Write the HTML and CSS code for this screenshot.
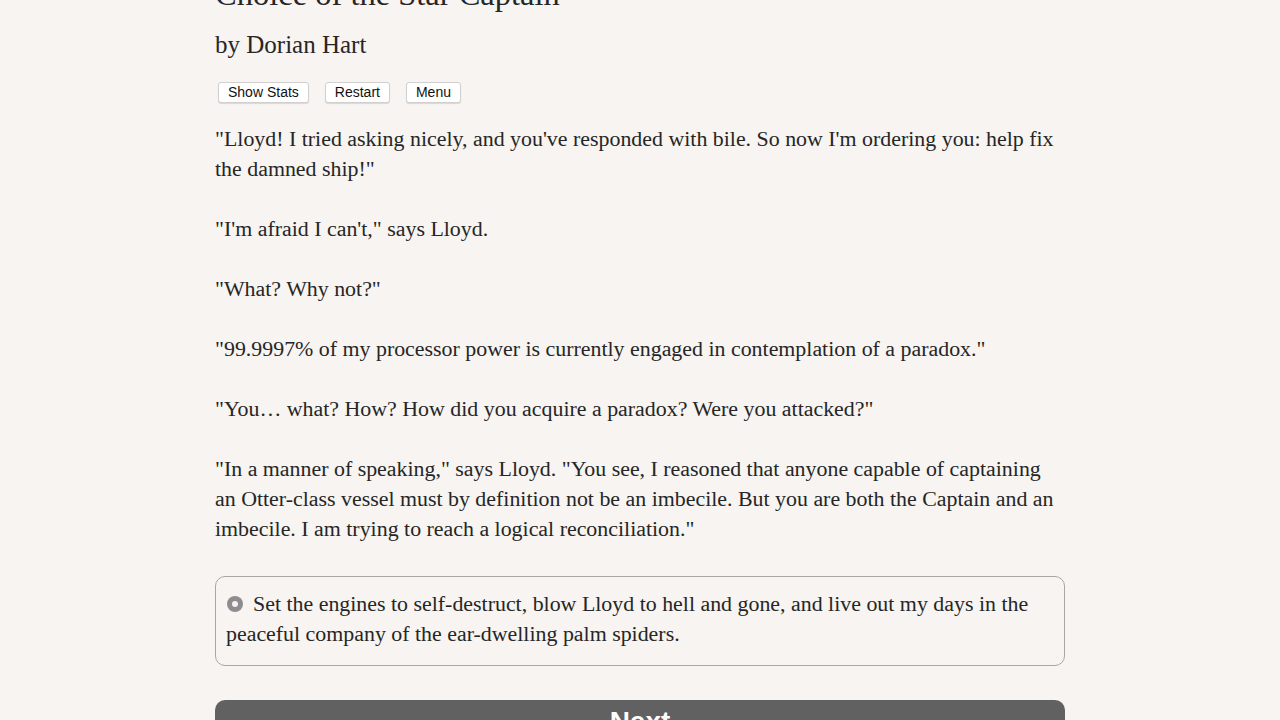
FILE: index.html
```html
<!DOCTYPE html>
<html>
<head>
<meta charset="utf-8">
<title>Choice of the Star Captain</title>
<link rel="stylesheet" href="styles.css">
</head>
<body>
<main class="page">
  <h1 class="title">Choice of the Star Captain</h1>
  <h2 class="author">by Dorian Hart</h2>
  <div class="toolbar">
    <button class="tool-btn">Show Stats</button>
    <button class="tool-btn">Restart</button>
    <button class="tool-btn">Menu</button>
  </div>
  <div class="story">
    <p>"Lloyd! I tried asking nicely, and you've responded with bile. So now I'm ordering you: help fix the damned ship!"</p>
    <p>"I'm afraid I can't," says Lloyd.</p>
    <p>"What? Why not?"</p>
    <p>"99.9997% of my processor power is currently engaged in contemplation of a paradox."</p>
    <p>"You… what? How? How did you acquire a paradox? Were you attacked?"</p>
    <p>"In a manner of speaking," says Lloyd. "You see, I reasoned that anyone capable of captaining an Otter-class vessel must by definition not be an imbecile. But you are both the Captain and an imbecile. I am trying to reach a logical reconciliation."</p>
  </div>
  <div class="choice">
    <label class="option"><span class="radio"></span>Set the engines to self-destruct, blow Lloyd to hell and gone, and live out my days in the peaceful company of the ear-dwelling palm spiders.</label>
  </div>
  <button class="next-btn">Next</button>
</main>
</body>
</html>
```
FILE: styles.css
```css
html, body {
  margin: 0;
  padding: 0;
  background: #f7f4f1;
}
body {
  color: #262626;
  font-family: "Liberation Serif", "Times New Roman", serif;
}
.page {
  width: 850px;
  margin: 0 auto;
}
.title {
  margin: -26px 0 0;
  font-size: 32.5px;
  line-height: 40px;
  font-weight: normal;
}
.author {
  margin: 16px 0 0;
  font-size: 25px;
  line-height: 30px;
  font-weight: normal;
}
.toolbar {
  display: flex;
  gap: 16px;
  margin: 22px 0 21px;
  padding-left: 3px;
}
.tool-btn {
  font-family: "Liberation Sans", Arial, sans-serif;
  font-size: 14px;
  line-height: 19px;
  height: 21px;
  padding: 0 9px;
  color: #111;
  background: #fff;
  border: 1px solid #d2d0ce;
  border-radius: 3px;
  box-shadow: 0 1px 1px rgba(0,0,0,0.12);
}
.story p {
  margin: 0 0 30px;
  font-size: 21.9px;
  line-height: 30px;
}
.choice {
  margin-top: 32px;
  border: 1px solid #a9a6a4;
  border-radius: 10px;
  padding: 12px 11px 16px 10px;
  font-size: 21.9px;
  line-height: 30px;
}
.option {
  display: block;
}
.radio {
  display: inline-block;
  width: 16px;
  height: 16px;
  margin: 0 10px 0 1px;
  border-radius: 50%;
  background: #8e8c8e;
  vertical-align: -1px;
  position: relative;
}
.radio::after {
  content: "";
  position: absolute;
  left: 5px;
  top: 5px;
  width: 6px;
  height: 6px;
  border-radius: 50%;
  background: #f4f2f2;
}
.next-btn {
  display: block;
  width: 100%;
  margin-top: 34px;
  height: 52px;
  padding: 0 0 8px;
  line-height: 44px;
  border: none;
  border-radius: 10px;
  background: #616161;
  color: #fff;
  font-family: "Liberation Sans", Arial, sans-serif;
  font-weight: bold;
  font-size: 28px;
}
```
